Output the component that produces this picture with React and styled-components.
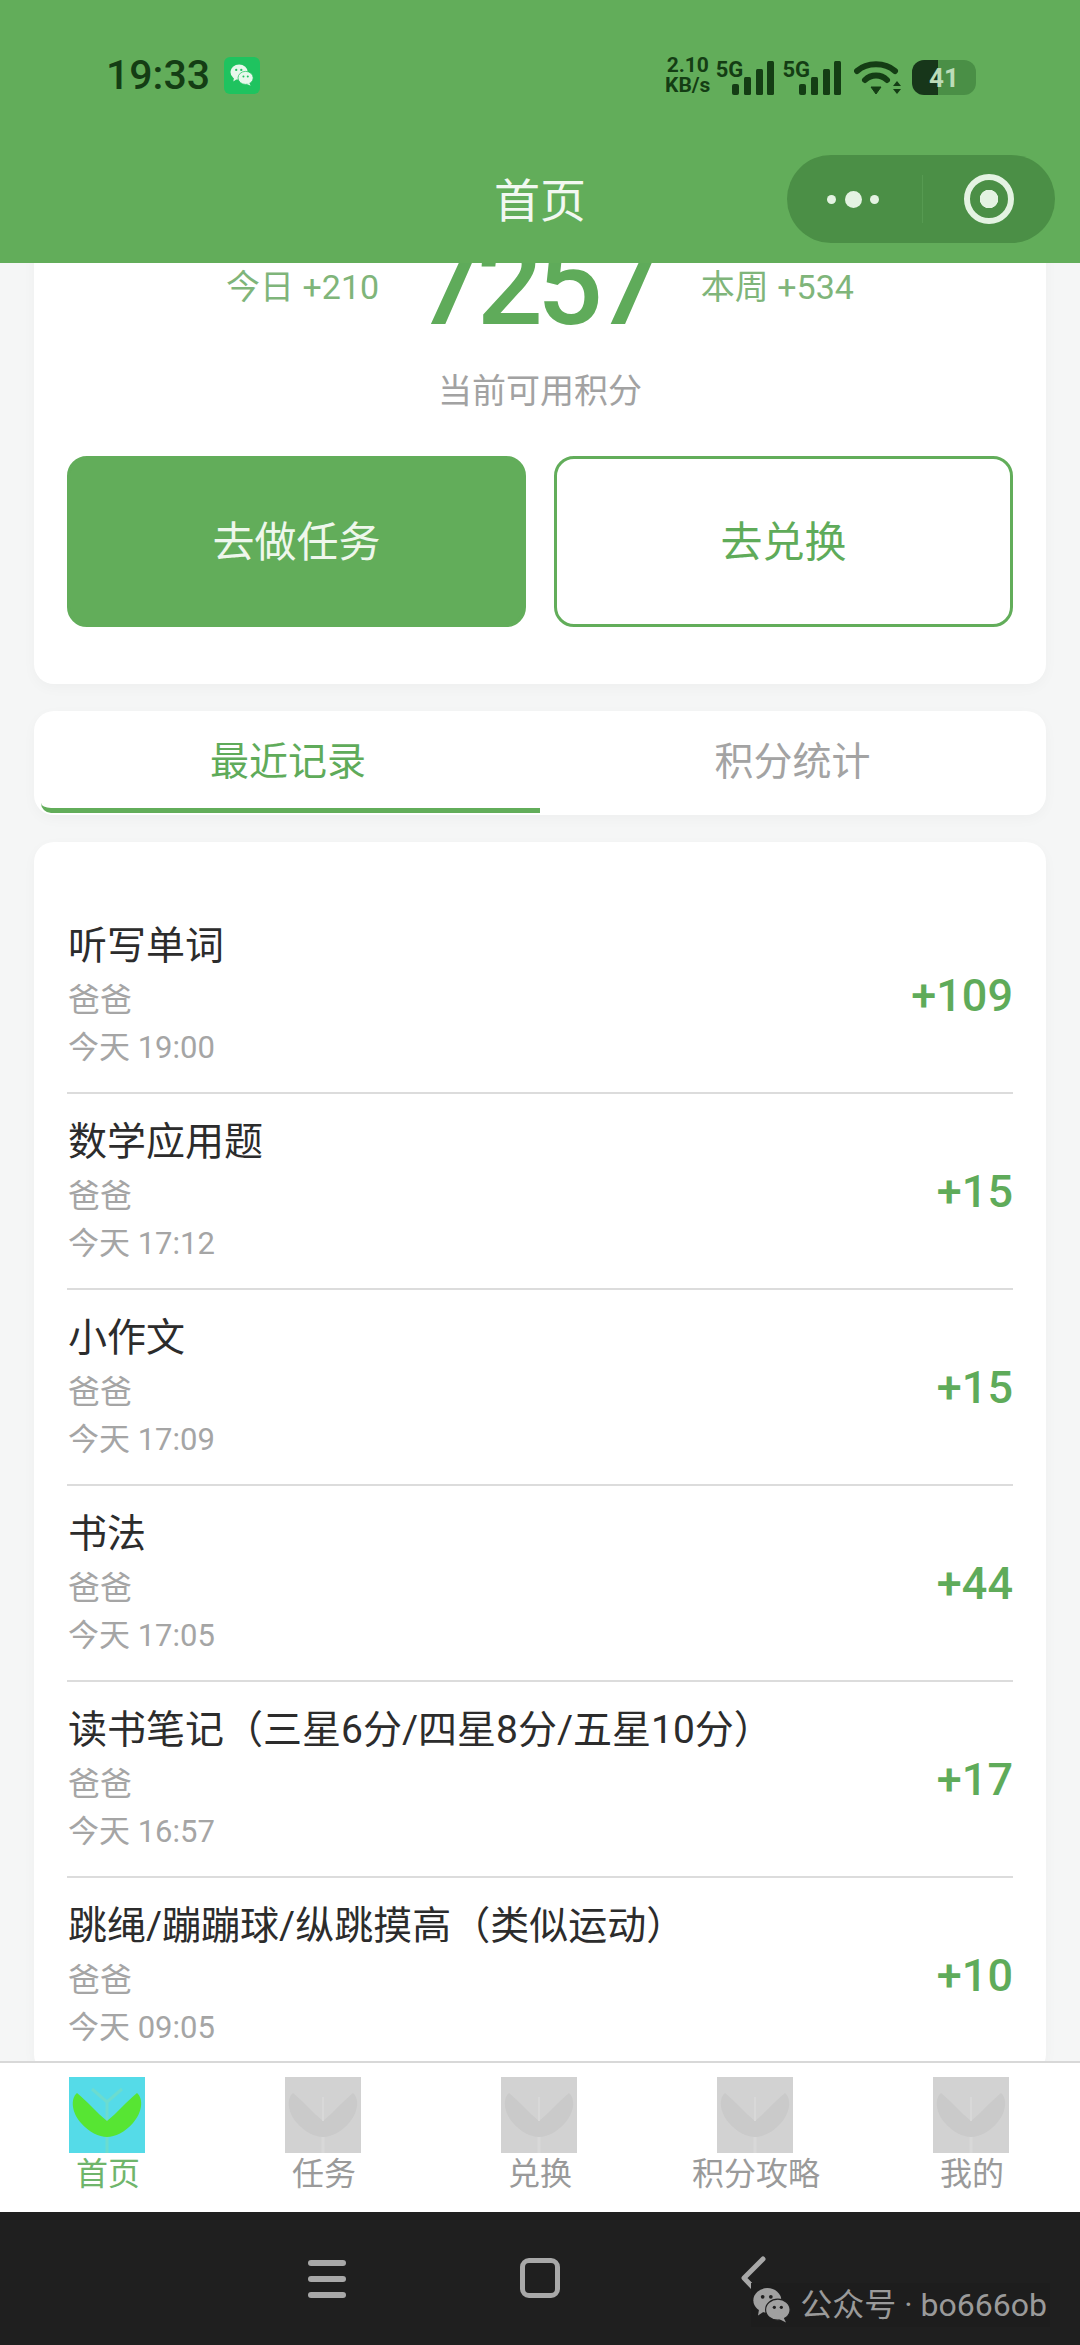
import React from "react";
import styled, { createGlobalStyle } from "styled-components";

const FONT = `Roboto, "Noto Sans CJK SC", "Noto Sans", sans-serif`;
const GREEN = "#62ad5a";
const TEXT_GREEN = "#5fab5a";
const DARK = "#143d14";

const GlobalStyle = createGlobalStyle`
  html, body {
    margin: 0;
    padding: 0;
    background: #f5f6f6;
    font-family: ${FONT};
  }
  * {
    box-sizing: border-box;
  }
`;

const records = [
  { title: "听写单词", time: "今天 19:00", value: "+109" },
  { title: "数学应用题", time: "今天 17:12", value: "+15" },
  { title: "小作文", time: "今天 17:09", value: "+15" },
  { title: "书法", time: "今天 17:05", value: "+44" },
  { title: "读书笔记（三星6分/四星8分/五星10分）", time: "今天 16:57", value: "+17" },
  { title: "跳绳/蹦蹦球/纵跳摸高（类似运动）", time: "今天 09:05", value: "+10" },
];

const tabs = ["首页", "任务", "兑换", "积分攻略", "我的"];

function WeChatBubbles({ size, back, front, eye }) {
  return (
    <svg width={size} height={size} viewBox="0 0 36 36">
      <ellipse cx="14" cy="14" rx="12" ry="10.5" fill={back} />
      <path d="M7 21 L6 27 L12 23 Z" fill={back} />
      <ellipse cx="23" cy="22" rx="10.5" ry="9" fill={front} stroke={eye} strokeWidth="1" />
      <path d="M28 29 L30 33 L24 30 Z" fill={front} />
      <circle cx="10" cy="11" r="1.6" fill={eye} />
      <circle cx="17" cy="11" r="1.6" fill={eye} />
      <circle cx="20" cy="20" r="1.4" fill={eye} />
      <circle cx="26" cy="20" r="1.4" fill={eye} />
    </svg>
  );
}

function SignalBars() {
  return (
    <svg width="43" height="34" viewBox="0 0 43 34">
      <rect x="0" y="23" width="7" height="11" rx="2" fill={DARK} />
      <rect x="12" y="16" width="7" height="18" rx="1.5" fill={DARK} />
      <rect x="24" y="8" width="7" height="26" rx="1.5" fill={DARK} />
      <rect x="35" y="0" width="7" height="34" rx="1.5" fill={DARK} />
    </svg>
  );
}

function Wifi() {
  return (
    <svg width="47" height="34" viewBox="0 0 47 34">
      <path d="M3 10 C13 1 31 1 41 10" fill="none" stroke={DARK} strokeWidth="6" strokeLinecap="round" />
      <path d="M11 19 C17 13 27 13 33 19" fill="none" stroke={DARK} strokeWidth="6" strokeLinecap="round" />
      <path d="M17 26 L27 26 L22 33 Z" fill={DARK} stroke={DARK} strokeLinejoin="round" />
      <path d="M43 20 L47 25 L39 25 Z M39 28 L47 28 L43 33 Z" fill={DARK} />
    </svg>
  );
}

function LeafIcon({ active }) {
  const bg = active ? "#55dbe8" : "#d2d2d2";
  const leaf = active ? "#57e533" : "#cacaca";
  const stem = active ? "#6cdccf" : "#d8d8d8";
  return (
    <svg width="76" height="76" viewBox="0 0 76 76">
      <rect width="76" height="76" fill={bg} />
      <path d="M38 60 V76" stroke={stem} strokeWidth="3" />
      {active && <path d="M23 12 L38 25 L53 12 M38 25 V44" fill="none" stroke={stem} strokeWidth="3" />}
      <path
        d="M8 16 C1 22 3 36 12 46 C20 55 30 60 38 60 C46 60 56 55 64 46 C73 36 75 22 68 16 C58 24 48 36 38 44 C28 36 18 24 8 16 Z"
        fill={leaf}
      />
      {!active && <path d="M38 20 V44" stroke={stem} strokeWidth="2" />}
    </svg>
  );
}

export default function App() {
  return (
    <Page>
      <GlobalStyle />
      <Header>
        <StatusBar>
          <StatusLeft>
            <Clock>19:33</Clock>
            <AppBadge>
              <WeChatBubbles size={26} back="#e8f8ec" front="#e8f8ec" eye="#1fc35f" />
            </AppBadge>
          </StatusLeft>
          <StatusRight>
            <Speed>
              <span>2.10</span>
              <span>KB/s</span>
            </Speed>
            <Signal>
              <NetLabel>5G</NetLabel>
              <SignalBars />
            </Signal>
            <Signal>
              <NetLabel>5G</NetLabel>
              <SignalBars />
            </Signal>
            <WifiSlot>
              <Wifi />
            </WifiSlot>
            <Battery>41</Battery>
          </StatusRight>
        </StatusBar>
        <NavRow>
          <span />
          <NavTitle>首页</NavTitle>
          <Capsule>
            <Dots>
              <Dot $size={9} />
              <Dot $size={17} />
              <Dot $size={9} />
            </Dots>
            <CapsuleLine />
            <Target />
          </Capsule>
        </NavRow>
      </Header>

      <Scroller>
        <PointsCard>
          <StatsRow>
            <Stat>今日 +210</Stat>
            <Points>7257</Points>
            <Stat>本周 +534</Stat>
          </StatsRow>
          <PointsLabel>当前可用积分</PointsLabel>
          <Actions>
            <ActionButton $primary>去做任务</ActionButton>
            <ActionButton>去兑换</ActionButton>
          </Actions>
        </PointsCard>

        <TabsCard>
          <TabItem $active>最近记录</TabItem>
          <TabItem>积分统计</TabItem>
        </TabsCard>

        <ListCard>
          {records.map(({ title, time, value }) => (
            <Row key={time}>
              <RowText>
                <RowTitle>{title}</RowTitle>
                <RowMeta>爸爸</RowMeta>
                <RowTime>{time}</RowTime>
              </RowText>
              <RowValue>{value}</RowValue>
            </Row>
          ))}
        </ListCard>
      </Scroller>

      <TabBar>
        {tabs.map((name, i) => (
          <TabBarItem key={name} $active={i === 0}>
            <LeafIcon active={i === 0} />
            <span>{name}</span>
          </TabBarItem>
        ))}
      </TabBar>

      <SystemBar>
        <Burger>
          <i />
          <i />
          <i />
        </Burger>
        <HomeKey />
        <BackKey viewBox="0 0 26 44" width="26" height="44">
          <path d="M23 3 L4 22 L23 42" fill="none" stroke="#a8a8a8" strokeWidth="5" strokeLinecap="round" strokeLinejoin="round" />
        </BackKey>
        <Watermark>
          <WeChatBubbles size={42} back="#a0a0a0" front="#a0a0a0" eye="#1f1f1f" />
          <span>公众号 · bo666ob</span>
        </Watermark>
      </SystemBar>
    </Page>
  );
}

const Page = styled.div`
  width: 1080px;
  height: 2345px;
  display: flex;
  flex-direction: column;
  overflow: hidden;
  background: #f5f6f6;
`;

const Header = styled.header`
  position: relative;
  z-index: 2;
  height: 263px;
  flex: none;
  padding-top: 55px;
  background: ${GREEN};
`;

const StatusBar = styled.div`
  height: 40px;
  padding: 0 104px 0 106px;
  display: flex;
  align-items: center;
  justify-content: space-between;
`;

const StatusLeft = styled.div`
  display: flex;
  align-items: center;
  gap: 14px;
`;

const Clock = styled.span`
  font-size: 41px;
  font-weight: 500;
  line-height: 40px;
  color: ${DARK};
`;

const AppBadge = styled.span`
  width: 36px;
  height: 37px;
  display: flex;
  align-items: center;
  justify-content: center;
  border-radius: 6px;
  background: #1fc35f;
`;

const StatusRight = styled.div`
  display: flex;
  align-items: flex-end;
  gap: 7px;
`;

const Speed = styled.div`
  width: 42px;
  display: flex;
  flex-direction: column;
  align-items: center;
  font-size: 21px;
  font-weight: 700;
  line-height: 20px;
  color: ${DARK};
  white-space: nowrap;
`;

const Signal = styled.div`
  display: flex;
  align-items: flex-start;
`;

const NetLabel = styled.span`
  margin-right: -11px;
  font-size: 22px;
  font-weight: 700;
  line-height: 18px;
  color: ${DARK};
`;

const WifiSlot = styled.span`
  display: flex;
  margin-left: 5px;
`;

const Battery = styled.div`
  width: 64px;
  height: 35px;
  margin-left: 4px;
  display: flex;
  align-items: center;
  justify-content: center;
  border-radius: 12px;
  background: linear-gradient(90deg, #17361a 0 41%, #4a8f46 41% 100%);
  font-size: 26px;
  font-weight: 700;
  color: #bcdcb8;
`;

const NavRow = styled.div`
  height: 88px;
  margin-top: 60px;
  padding: 0 25px;
  display: grid;
  grid-template-columns: minmax(0, 1fr) auto minmax(0, 1fr);
  align-items: center;
`;

const NavTitle = styled.h1`
  margin: 0 0 4px;
  font-size: 46px;
  font-weight: 400;
  color: #f2f8f1;
`;

const Capsule = styled.div`
  justify-self: end;
  width: 268px;
  height: 88px;
  padding-left: 40px;
  display: flex;
  align-items: center;
  border-radius: 44px;
  background: #4b8f46;
`;

const Dots = styled.div`
  width: 52px;
  display: flex;
  align-items: center;
  justify-content: space-between;
`;

const Dot = styled.i`
  width: ${(p) => p.$size}px;
  height: ${(p) => p.$size}px;
  border-radius: 50%;
  background: #e4f3e2;
`;

const CapsuleLine = styled.i`
  width: 1px;
  height: 48px;
  margin-left: 43px;
  background: #569a51;
`;

const Target = styled.i`
  width: 50px;
  height: 50px;
  margin-left: 41px;
  border: 6px solid #e4f3e2;
  border-radius: 50%;
  background: radial-gradient(circle, #e4f3e2 0 9px, transparent 9.5px);
`;

const Scroller = styled.main`
  flex: 1;
  min-height: 0;
  overflow: hidden;
`;

const Panel = styled.section`
  margin: 0 34px;
  width: 1012px;
  background: #fff;
  border-radius: 20px;
  box-shadow: 0 4px 14px rgba(0, 0, 0, 0.03);
`;

const PointsCard = styled(Panel)`
  margin-top: -60px;
  height: 481px;
  padding: 0 33px;
`;

const StatsRow = styled.div`
  height: 124px;
  display: flex;
  align-items: flex-end;
  justify-content: center;
  gap: 41px;
`;

const Stat = styled.span`
  margin-bottom: 18px;
  font-size: 34px;
  color: #7fb57a;
  white-space: nowrap;
`;

const Points = styled.span`
  margin: 0 3px -7px -3px;
  font-size: 116px;
  line-height: 100px;
  font-weight: 500;
  letter-spacing: -6px;
  color: ${TEXT_GREEN};
`;

const PointsLabel = styled.div`
  margin-top: 41px;
  text-align: center;
  font-size: 34px;
  line-height: 46px;
  color: #a2a2a2;
`;

const Actions = styled.div`
  margin-top: 42px;
  display: grid;
  grid-template-columns: 1fr 1fr;
  gap: 28px;
`;

const ActionButton = styled.button`
  height: 171px;
  padding: 0 0 6px;
  border: 3px solid ${GREEN};
  border-radius: 20px;
  background: ${(p) => (p.$primary ? GREEN : "#fff")};
  color: ${(p) => (p.$primary ? "#eef7ec" : TEXT_GREEN)};
  font-family: ${FONT};
  font-size: 42px;
`;

const TabsCard = styled(Panel)`
  margin-top: 27px;
  height: 104px;
  padding: 0 7px 2px;
  display: grid;
  grid-template-columns: 499px 1fr;
`;

const TabItem = styled.div`
  display: flex;
  align-items: center;
  justify-content: center;
  padding: 0 ${(p) => (p.$active ? 5 : 0)}px 4px ${(p) => (p.$active ? 0 : 6)}px;
  border-bottom: 5px solid ${(p) => (p.$active ? GREEN : "transparent")};
  border-radius: 0 0 0 10px;
  font-size: 39px;
  color: ${(p) => (p.$active ? TEXT_GREEN : "#a3a3a3")};
`;

const ListCard = styled(Panel)`
  margin-top: 27px;
  padding: 56px 33px 0;
`;

const Row = styled.div`
  height: 196px;
  display: flex;
  align-items: center;
  justify-content: space-between;
  border-bottom: 2px solid #dcdcdc;
`;

const RowText = styled.div`
  display: flex;
  flex-direction: column;
  gap: 8px;
  padding: 1px 0 0 1px;
`;

const RowTitle = styled.div`
  margin-bottom: 3px;
  font-size: 39px;
  line-height: 46px;
  color: #2c2c2c;
`;

const RowMeta = styled.div`
  font-size: 32px;
  line-height: 40px;
  color: #a5a5a5;
`;

const RowTime = styled(RowMeta)`
  font-size: 31px;
`;

const RowValue = styled.div`
  font-size: 45px;
  font-weight: 500;
  color: ${TEXT_GREEN};
`;

const TabBar = styled.nav`
  position: relative;
  z-index: 2;
  height: 151px;
  flex: none;
  padding-top: 14px;
  display: grid;
  grid-template-columns: repeat(5, 216px);
  background: #fff;
  border-top: 2px solid #d8d8d8;
`;

const TabBarItem = styled.div`
  display: flex;
  flex-direction: column;
  align-items: center;
  font-size: 32px;
  line-height: 43px;
  color: ${(p) => (p.$active ? "#6fb56b" : "#9a9a9a")};

  svg {
    display: block;
    margin-left: -3px;
  }
`;

const SystemBar = styled.div`
  position: relative;
  z-index: 2;
  height: 133px;
  flex: none;
  display: grid;
  grid-template-columns: repeat(3, 213px);
  justify-content: center;
  justify-items: center;
  align-items: start;
  padding-top: 46px;
  background: #1f1f1f;
`;

const Burger = styled.div`
  width: 38px;
  display: flex;
  flex-direction: column;
  gap: 10px;
  padding-top: 2px;

  i {
    height: 6px;
    border-radius: 3px;
    background: #a8a8a8;
  }
`;

const HomeKey = styled.div`
  width: 40px;
  height: 40px;
  border: 5px solid #a8a8a8;
  border-radius: 9px;
`;

const BackKey = styled.svg`
  margin-top: -2px;
`;

const Watermark = styled.div`
  position: absolute;
  right: 30px;
  top: 71px;
  padding-right: 3px;
  display: flex;
  align-items: center;
  gap: 7px;
  background: #1d1d1d;
  font-size: 32px;
  line-height: 44px;
  color: #9a9a9a;
  white-space: nowrap;
`;
